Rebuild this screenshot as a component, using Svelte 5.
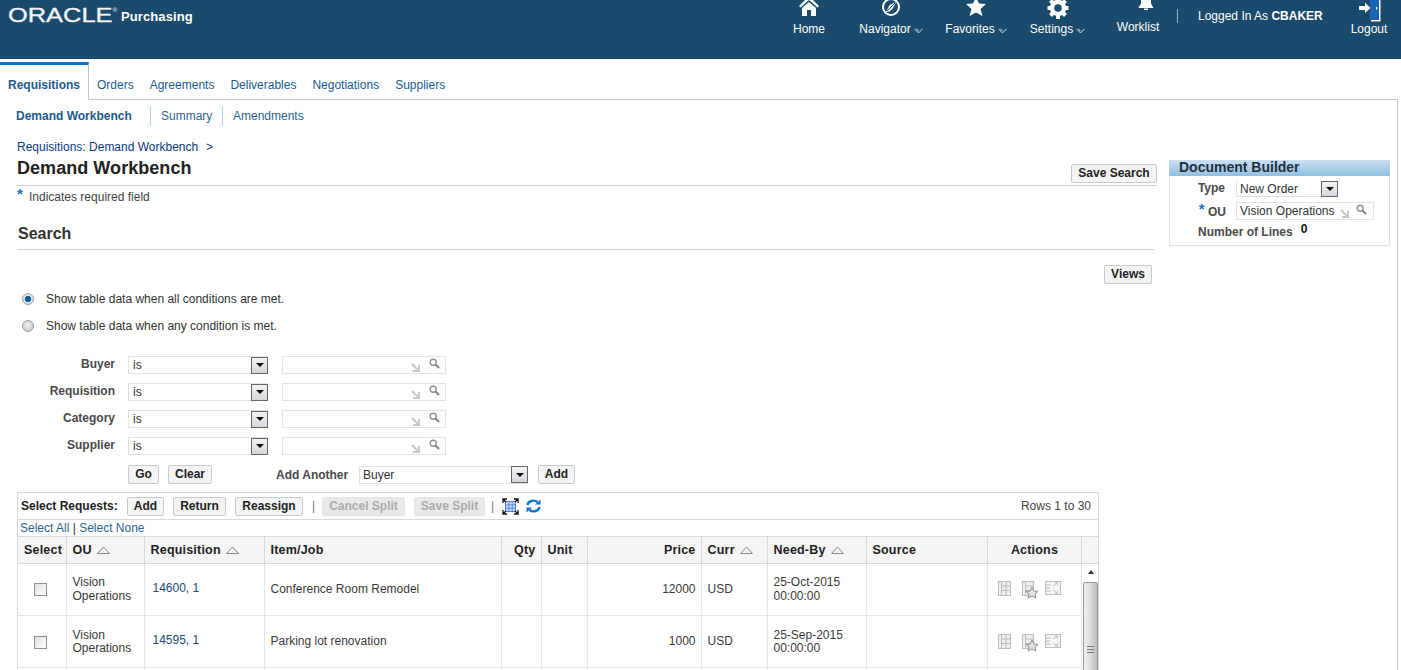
<script>
  const topNav = [
    { label: 'Home', icon: 'home', width: 66, chev: false },
    { label: 'Navigator', icon: 'compass', width: 98, chev: true },
    { label: 'Favorites', icon: 'star', width: 72, chev: true },
    { label: 'Settings', icon: 'gear', width: 91, chev: true }
  ];
  const tabs = ['Orders', 'Agreements', 'Deliverables', 'Negotiations', 'Suppliers'];
  const filters = ['Buyer', 'Requisition', 'Category', 'Supplier'];
  const rows = [
    { req: '14600, 1', item: 'Conference Room Remodel', price: '12000', date: '25-Oct-2015' },
    { req: '14595, 1', item: 'Parking lot renovation', price: '1000', date: '25-Sep-2015' }
  ];
</script>

{#snippet search()}
  <span class="lov-icons">
    <svg class="lov-arrow" width="10" height="10" viewBox="0 0 10 10"><path d="M1 1 L7 7 M8 2 V8 H2" fill="none" stroke="#c4c8ca" stroke-width="2"/></svg>
    <svg class="lov-glass" width="11" height="11" viewBox="0 0 11 11"><circle cx="4.2" cy="4.2" r="3" fill="none" stroke="#8b9297" stroke-width="1.4"/><path d="M6.5 6.5 L10 10" stroke="#7d858a" stroke-width="2"/></svg>
  </span>
{/snippet}

{#snippet drop()}
  <span class="drop"><i></i></span>
{/snippet}

{#snippet sortMark()}
  <svg class="sort" width="13" height="8" viewBox="0 0 13 8"><path d="M0.5 7.5 L6.5 1 L12.5 7.5 Z" fill="none" stroke="#7f8b95"/></svg>
{/snippet}

<div class="page">
  <header class="top">
    <div class="brand">
      <span class="oracle">ORACLE<sup>®</sup></span>
      <span class="product">Purchasing</span>
    </div>
    <nav class="global">
      {#each topNav as n}
        <div class="gitem" style="width:{n.width}px">
          <svg class="gicon" width="24" height="24" viewBox="0 0 24 24">
            {#if n.icon === 'home'}
              <path d="M12 -3 L2 7 L3.5 8.5 L12 1 L20.5 8.5 L22 7 Z" fill="#fff"/>
              <path d="M5 9 L12 3 L19 9 V17 H14 V11 H10 V17 H5 Z" fill="#fff"/>
            {:else if n.icon === 'compass'}
              <circle cx="12" cy="8" r="8" fill="none" stroke="#fff" stroke-width="2"/>
              <path d="M17 3 L13.5 10 L10.5 12.5 L7 13 L10.5 6 Z" fill="#fff"/>
              <path d="M16 4 L8 12" stroke="#1a4b6c" stroke-width="1"/>
            {:else if n.icon === 'star'}
              <path d="M12 -2 L15 4.5 L22 5 L16.5 10 L18.5 17 L12 13.5 L5.5 17 L7.5 10 L2 5 L9 4.5 Z" fill="#fff"/>
            {:else}
              <circle cx="12" cy="9" r="6" fill="none" stroke="#fff" stroke-width="4.5"/>
              <g stroke="#fff" stroke-width="4">
                <path d="M12 -2 V2"/><path d="M12 16 V20"/><path d="M1.5 9 H5"/><path d="M19 9 H22.5"/>
                <path d="M4.5 1.5 L7 4"/><path d="M17 14 L19.5 16.5"/><path d="M4.5 16.5 L7 14"/><path d="M17 4 L19.5 1.5"/>
              </g>
            {/if}
          </svg>
          <span class="glabel">{n.label}{#if n.chev}<svg class="chev" width="9" height="6" viewBox="0 0 9 6"><path d="M.5 .8 L4.5 5 L8.5 .8 M2.5 .8 L4.5 3" fill="none" stroke="#cfe0ea"/></svg>{/if}</span>
        </div>
      {/each}
      <div class="gitem worklist">
        <svg class="gicon bell" width="18" height="24" viewBox="0 0 18 24">
          <path d="M4 0 H14 V4 C14 6 16 7 16.5 9 H1.5 C2 7 4 6 4 4 Z" fill="#fff"/>
          <path d="M7 9.5 H11 V11 H7 Z" fill="#fff"/>
        </svg>
        <span class="glabel">Worklist</span>
      </div>
      <span class="gsep"></span>
      <span class="logged">Logged In As <b>CBAKER</b></span>
      <div class="gitem logout">
        <svg class="gicon" width="24" height="24" viewBox="0 0 24 24">
          <path d="M13 0 H22 V21 H13 Z" fill="#1c63b7"/>
          <path d="M22 0 H23.5 V22.5 H14 V21 H22 Z" fill="#fff"/>
          <path d="M2 7 H8 V3.5 L13.5 9 L8 14 V11 H2 Z" fill="#fff"/>
          <rect x="19" y="8" width="1.2" height="2.5" fill="#fff"/>
        </svg>
        <span class="glabel">Logout</span>
      </div>
    </nav>
  </header>

  <div class="tabs">
    <a class="tab active">Requisitions</a>
    <div class="tabrest">
      {#each tabs as t}<a class="tab">{t}</a>{/each}
    </div>
  </div>

  <div class="frame">
    <div class="subtabs">
      <a class="sub current">Demand Workbench</a>
      <a class="sub s1">Summary</a>
      <a class="sub s2">Amendments</a>
    </div>

    <div class="columns">
      <main class="main">
        <div class="crumb">Requisitions: Demand Workbench&nbsp; <span class="gt">&gt;</span></div>
        <div class="titlebar">
          <h1>Demand Workbench</h1>
          <button class="btn save">Save Search</button>
        </div>
        <div class="required"><span class="star">*</span>Indicates required field</div>
        <h2>Search</h2>
        <div class="views"><button class="btn">Views</button></div>

        <label class="radio"><span class="rd on"></span>Show table data when all conditions are met.</label>
        <label class="radio second"><span class="rd"></span>Show table data when any condition is met.</label>

        <div class="filters">
          {#each filters as f}
            <div class="frow">
              <span class="flabel">{f}</span>
              <span class="select"><span>is</span>{@render drop()}</span>
              <span class="lov">{@render search()}</span>
            </div>
          {/each}
          <div class="factions">
            <button class="btn go">Go</button>
            <button class="btn clear">Clear</button>
            <span class="addlabel">Add Another</span>
            <span class="select addsel"><span>Buyer</span>{@render drop()}</span>
            <button class="btn add">Add</button>
          </div>
        </div>

        <section class="results">
          <div class="toolbar">
            <b class="tlabel">Select Requests:</b>
            <button class="btn">Add</button>
            <button class="btn">Return</button>
            <button class="btn">Reassign</button>
            <span class="bar first">|</span>
            <button class="btn off">Cancel Split</button>
            <button class="btn off">Save Split</button>
            <span class="bar">|</span>
            <svg class="fit" width="17" height="17" viewBox="0 0 17 17">
              <rect x="3.5" y="3.5" width="10" height="10" fill="#c9d9f6" stroke="#4f7fd8"/>
              <path d="M3.5 6.8 H13.5 M3.5 10.2 H13.5 M6.8 3.5 V13.5 M10.2 3.5 V13.5" stroke="#5d8ae0" stroke-width="1"/>
              <path d="M1 5 V1 H5 M12 1 H16 V5 M16 12 V16 H12 M5 16 H1 V12 M1 1 L4 4 M16 1 L13 4 M16 16 L13 13 M1 16 L4 13" fill="none" stroke="#111" stroke-width="1.3"/>
            </svg>
            <svg class="refresh" width="15" height="14" viewBox="0 0 15 14">
              <path d="M1.5 6 A6 5 0 0 1 11.5 3" fill="none" stroke="#1273cf" stroke-width="2.4"/>
              <path d="M9 5.6 H14.5 V0.5 Z" fill="#1273cf"/>
              <path d="M13.5 8 A6 5 0 0 1 3.5 11" fill="none" stroke="#1273cf" stroke-width="2.4"/>
              <path d="M6 8.4 H0.5 V13.5 Z" fill="#1273cf"/>
            </svg>
            <span class="rowcount">Rows 1 to 30</span>
          </div>
          <div class="selects"><a>Select All</a> | <a>Select None</a></div>
          <div class="clip">
            <table>
              <colgroup>
                <col style="width:48px"/><col style="width:78px"/><col style="width:120px"/><col style="width:237px"/>
                <col style="width:40px"/><col style="width:46px"/><col style="width:114px"/><col style="width:66px"/>
                <col style="width:99px"/><col style="width:121px"/><col style="width:94px"/><col style="width:18px"/>
              </colgroup>
              <thead>
                <tr>
                  <th class="c">Select</th>
                  <th>OU {@render sortMark()}</th>
                  <th>Requisition {@render sortMark()}</th>
                  <th>Item/Job</th>
                  <th class="r">Qty</th>
                  <th>Unit</th>
                  <th class="r">Price</th>
                  <th>Curr {@render sortMark()}</th>
                  <th>Need-By {@render sortMark()}</th>
                  <th>Source</th>
                  <th class="c">Actions</th>
                  <th></th>
                </tr>
              </thead>
              <tbody>
                {#each rows as row, i}
                  <tr>
                    <td class="c"><span class="check"></span></td>
                    <td>Vision<br/>Operations</td>
                    <td class="reqcell"><a>{row.req}</a></td>
                    <td>{row.item}</td>
                    <td></td>
                    <td></td>
                    <td class="r">{row.price}</td>
                    <td>USD</td>
                    <td>{row.date}<br/>00:00:00</td>
                    <td></td>
                    <td class="acts">
                      <svg width="64" height="18" viewBox="0 0 64 18">
                        <g fill="none" stroke="#b9bdc0">
                          <rect x="1.5" y="1.5" width="12" height="14" fill="#eef0f1"/>
                          <path d="M4.5 1.5 V15.5 M9 1.5 V15.5 M4.5 6 H13.5 M4.5 10.5 H13.5"/>
                          <rect x="25.5" y="1.5" width="11" height="14" fill="#eef0f1"/>
                          <path d="M28.5 1.5 V15.5 M28.5 6 H36.5 M28.5 10.5 H36.5"/>
                          <path d="M35 7 L37 11 L41 11.5 L38 14 L39 18 L35 16 L31 18 L32 14 L29 11.5 L33 11 Z" fill="#dfe1e2" stroke="#8d9194"/>
                          <rect x="48.5" y="1.5" width="15" height="13" fill="#f5f6f6"/>
                          <path d="M49 5 H54 M49 8 H53 M49 11 H54 M56 6 L60 3 M58 3 H60.5 V5.5 M56 10 L60 13 M58 13 H60.5 V10.5"/>
                        </g>
                      </svg>
                    </td>
                    {#if i === 0}
                      <td class="scrollcell" rowspan="3">
                        <div class="scroll">
                          <span class="up"></span>
                          <div class="thumb"><span class="grip"></span></div>
                        </div>
                      </td>
                    {/if}
                  </tr>
                {/each}
                <tr class="stub">
                  {#each Array(11) as _}<td></td>{/each}
                </tr>
              </tbody>
            </table>
          </div>
        </section>
      </main>

      <aside class="builder">
        <div class="bhead">Document Builder</div>
        <div class="brow type">
          <span class="blabel">Type</span>
          <span class="select bsel"><span>New Order</span>{@render drop()}</span>
        </div>
        <div class="brow ou">
          <span class="blabel ouLabel"><span class="star inl">*</span> OU</span>
          <span class="lov blov"><span>Vision Operations</span>{@render search()}</span>
        </div>
        <div class="lines"><b>Number of Lines</b><b class="zero">0</b></div>
      </aside>
    </div>
  </div>
</div>

<style>
  :global(body) { margin: 0; background: #fff; }
  .page {
    width: 1401px; height: 670px; overflow: hidden;
    font-family: "Liberation Sans", Arial, sans-serif; font-size: 12px; color: #333;
  }
  a { cursor: pointer; }
  button { font-family: inherit; }

  .top { height: 59px; background: #1a4b6c; display: flex; color: #fff; }
  .brand { display: flex; align-items: flex-start; padding-left: 8px; }
  .oracle {
    display: inline-block; width: 82px; margin-top: 3px; font-size: 20px; line-height: 24px;
    transform: scaleX(1.27); transform-origin: left center; color: #f2f5f7; letter-spacing: 0;
    -webkit-text-stroke: 0.3px #f2f5f7; white-space: nowrap;
  }
  .oracle sup { font-size: 5px; vertical-align: 10px; line-height: 0; -webkit-text-stroke: 0; }
  .product { margin: 9px 0 0 31px; font-weight: bold; font-size: 13px; line-height: 16px; letter-spacing: .1px; }
  .global { margin-left: auto; display: flex; align-items: flex-start; }
  .gitem { display: flex; flex-direction: column; align-items: center; height: 59px; overflow: hidden; }
  .gicon { display: block; margin-top: -1px; height: 24px; flex: none; }
  .glabel { margin-top: -1px; line-height: 14px; white-space: nowrap; }
  .chev { margin-left: 3px; vertical-align: -1px; }
  .worklist { width: 70px; }
  .worklist .glabel { margin-top: -3px; }
  .bell { margin-left: 16px; }
  .gsep { width: 1px; height: 14px; margin: 9px 20px 0 4px; background: #8fb3cd; }
  .logged { margin-top: 9px; line-height: 14px; width: 139px; white-space: nowrap; }
  .logged b { font-weight: bold; }
  .logout { width: 64px; }

  .tabs { display: flex; height: 41px; align-items: stretch; }
  .tab { color: #1a5c96; line-height: 14px; }
  .tab.active {
    box-sizing: border-box; width: 89px; margin-top: 3px; padding: 13px 0 0 8px; font-weight: bold;
    border-top: 3px solid #0572ce; border-right: 1px solid #c8c8c8; color: #1c5a8e;
  }
  .tabrest {
    flex: 1; margin-right: 3px; padding: 19px 0 0 8px; display: flex; gap: 16px; border-bottom: 1px solid #c8c8c8;
    box-sizing: border-box;
  }

  .frame { margin-right: 3px; border-right: 1px solid #c8c8c8; height: 571px; box-sizing: border-box; }
  .subtabs { height: 31px; display: flex; align-items: center; padding-left: 16px; box-sizing: border-box; }
  .sub { color: #2d6491; height: 20px; line-height: 20px; }
  .current { font-weight: bold; color: #1c5a8e; width: 134px; }
  .s1 { border-left: 1px solid #b9cfe2; padding-left: 10px; width: 61px; }
  .s2 { border-left: 1px solid #b9cfe2; padding-left: 10px; }

  .columns { display: flex; align-items: flex-start; padding-left: 17px; }
  .main { width: 1140px; flex: none; }
  .crumb { margin-top: 9px; line-height: 14px; color: #0b3a83; height: 14px; }
  .gt { margin-left: 1px; }
  .titlebar {
    height: 32px; box-sizing: border-box; display: flex; justify-content: space-between; border-bottom: 1px solid #d0d0d0;
  }
  h1 { margin: 3px 0 0; font-size: 18px; line-height: 22px; color: #222; font-weight: bold; letter-spacing: .05px; }
  .btn {
    box-sizing: border-box; height: 19px; padding: 0 8px; border: 1px solid #c5ccd0; border-radius: 2px;
    background: #f4f4f4; color: #222; font-size: 12px; font-weight: bold; line-height: 17px; letter-spacing: 0;
    white-space: nowrap;
  }
  .save { width: 86px; padding: 0; margin-top: 10px; }
  .required { height: 22px; line-height: 22px; color: #444; padding-left: 0; display: flex; }
  .star { color: #1273cf; font-size: 15px; line-height: 15px; font-weight: bold; width: 12px; }
  .star.inl { font-size: 15px; width: auto; position: relative; top: -2px; line-height: 10px; }
  h2 {
    margin: 15px 3px 0 0; height: 27px; padding-left: 1px; box-sizing: border-box; font-size: 16px; line-height: 22px; font-weight: bold; color: #333;
    border-bottom: 1px solid #d0d0d0;
  }
  .views { display: flex; justify-content: flex-end; padding-right: 5px; margin-top: 15px; height: 19px; }
  .views .btn { width: 48px; padding: 0; }
  .radio { display: flex; align-items: center; height: 14px; margin-top: 8px; padding-left: 5px; color: #333; }
  .radio.second { margin-top: 13px; }
  .rd {
    box-sizing: border-box; width: 12px; height: 12px; border-radius: 50%; margin-right: 12px;
    border: 1px solid #9a9ea1; background: radial-gradient(circle at 45% 40%, #f4f4f4, #bbb);
  }
  .rd.on { background: radial-gradient(circle, #0e5f9f 0 2.8px, #e4e8ea 3.6px, #c8ccce); }

  .filters { margin-top: 23px; }
  .frow { display: flex; height: 18px; margin-bottom: 9px; align-items: flex-start; }
  .flabel { width: 98px; text-align: right; font-weight: bold; color: #4a4a4a; line-height: 16px; }
  .select {
    box-sizing: border-box; display: flex; justify-content: space-between; align-items: center; height: 18px; width: 140px; margin-left: 13px;
    border: 1px solid #dbe4e8; border-right: 0; color: #333; padding-left: 4px; line-height: 16px;
  }
  .drop {
    box-sizing: border-box; width: 17px; height: 17px; border: 1px solid #666; flex: none; display: flex; align-items: center; justify-content: center;
    background: linear-gradient(#f4f4f6, #d4d6dc);
  }
  .drop i { width: 0; height: 0; border: 4px solid transparent; border-top: 4px solid #111; border-bottom: 0; }
  .lov {
    box-sizing: border-box; position: relative; width: 164px; height: 18px; margin-left: 14px; border: 1px solid #dbe4e8; display: block;
  }
  .lov-icons { position: absolute; right: 5px; top: 1px; display: flex; gap: 8px; align-items: flex-start; }
  .lov-arrow { margin-top: 5px; }
  .factions { display: flex; align-items: center; height: 19px; margin-top: 10px; padding-left: 111px; }
  .go { width: 31px; padding: 0; }
  .clear { width: 44px; padding: 0; margin-left: 9px; }
  .addlabel { margin-left: 64px; font-weight: bold; color: #4a4a4a; width: 76px; white-space: nowrap; }
  .addsel { width: 169px; margin-left: 7px; padding-left: 3px; }
  .add { width: 37px; padding: 0; margin-left: 10px; }

  .results { margin-top: 8px; width: 1082px; border: 1px solid #d3dbe1; border-bottom: 0; box-sizing: border-box; }
  .toolbar { height: 27px; box-sizing: border-box; display: flex; align-items: center; padding-left: 3px; border-bottom: 1px solid #d3dbe1; }
  .tlabel { color: #222; width: 97px; white-space: nowrap; flex: none; margin-right: 9px; }
  .toolbar .btn { margin-right: 9px; }
  .toolbar .btn:nth-of-type(1) { width: 37px; padding: 0; }
  .toolbar .btn:nth-of-type(2) { width: 53px; padding: 0; }
  .toolbar .btn:nth-of-type(3) { width: 68px; padding: 0; }
  .toolbar .off { background: #e9e9e9; color: #a8acaf; border-color: #e4e4e4; padding: 0; }
  .toolbar .btn.off:nth-of-type(4) { width: 83px; margin-right: 9px; }
  .toolbar .btn.off:nth-of-type(5) { width: 71px; margin-right: 6px; }
  .bar { color: #777; width: 10px; }
  .fit { margin-left: 1px; flex: none; }
  .refresh { margin-left: 7px; flex: none; }
  .rowcount { margin-left: auto; padding-right: 7px; color: #444; }
  .selects { height: 17px; line-height: 17px; padding-left: 2px; color: #333; border-bottom: 1px solid #d3dbe1; box-sizing: border-box; }
  .selects a { color: #2a6590; }
  .clip { height: 134px; overflow: hidden; }
  table { border-collapse: collapse; table-layout: fixed; width: 1081px; }
  th, td { border-right: 1px solid #e4e7ea; padding: 0 5px 0 6px; text-align: left; font-weight: normal; vertical-align: middle; box-sizing: border-box; }
  th {
    height: 26px; background: #f5f5f5; color: #222; font-weight: bold; border-right-color: #d3dbe1; border-bottom: 1px solid #d3dbe1;
    letter-spacing: .2px; white-space: nowrap; font-size: 12.5px;
  }
  th:last-child { border-right: 0; }
  td { height: 52px; padding-top: 1px; border-bottom: 1px solid #e4e7ea; color: #3a3a3a; line-height: 13.5px; }
  tbody tr:nth-child(2) td { padding-top: 2px; }
  .c { text-align: center; }
  .r { text-align: right; }
  .sort { margin-left: 2px; }
  .check {
    display: inline-block; box-sizing: border-box; width: 13px; height: 13px; border: 1px solid #8a8e91;
    background: linear-gradient(135deg, #dfe2e6, #fdfdfd); vertical-align: middle; margin-right: 3px;
  }
  .reqcell { padding-left: 8px; }
  .reqcell a { color: #1c4a78; position: relative; top: -1px; }
  .acts { padding: 0 0 0 9px; }
  .acts svg { display: block; overflow: visible; }
  .stub td { height: 10px; }
  td.scrollcell { padding: 0; border: 0; vertical-align: top; }
  .scroll { height: 107px; position: relative; }
  .up {
    position: absolute; left: 6px; top: 6px; width: 0; height: 0;
    border: 3.5px solid transparent; border-bottom: 4px solid #333; border-top: 0;
  }
  .thumb {
    position: absolute; left: 1px; top: 18px; width: 15px; height: 100px; box-sizing: border-box; border: 1px solid #999; border-radius: 2px 2px 0 0;
    background: linear-gradient(90deg, #f2f2f2, #dedede 45%, #bdbdbd);
  }
  .grip {
    position: absolute; left: 3px; top: 63px; width: 7px; height: 5px;
    border-top: 1px solid #777; border-bottom: 1px solid #777;
    background: linear-gradient(#0000 40%, #777 40% 60%, #0000 60%);
  }

  .builder {
    box-sizing: border-box; width: 221px; height: 86px; margin: 29px 0 0 12px; border: 1px solid #dde2e6; flex: none; position: relative;
  }
  .bhead {
    height: 16px; margin: -1px -1px 0; padding-left: 10px; font-size: 14px; line-height: 14px; font-weight: bold; color: #1f2f3d;
    background: linear-gradient(#c9e0f2, #8fbfe2);
  }
  .brow { display: flex; align-items: flex-start; height: 21px; }
  .type { margin-top: 4px; }
  .ou { margin-top: 1px; }
  .blabel { width: 56px; text-align: right; font-weight: bold; color: #4a4a4a; line-height: 17px; }
  .type .blabel { padding-right: 1px; width: 55px; }
  .ouLabel { padding-top: 2px; }
  .bsel { width: 102px; margin-left: 10px; height: 17px; border-top-color: #fff; border-left-color: #dfe7ea; padding-left: 3px; }
  .bsel .drop { height: 16px; }
  .blov { width: 138px; height: 18px; margin-left: 10px; padding-left: 3px; line-height: 16px; white-space: nowrap; color: #333; }
  .blov .lov-icons { gap: 6px; right: 6px; background: transparent; }
  .lines { display: flex; padding-left: 28px; color: #4a4a4a; line-height: 14px; margin-top: 2px; }
  .zero { margin: -3px 0 0 8px; color: #111; }
</style>
